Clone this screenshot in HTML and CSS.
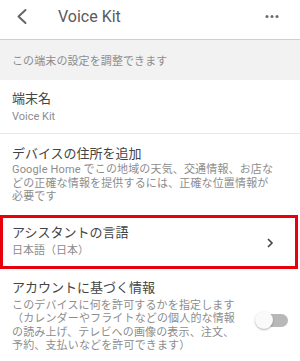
FILE: index.html
```html
<!DOCTYPE html>
<html lang="ja">
<head>
<meta charset="utf-8">
<link rel="stylesheet" href="styles.css">
</head>
<body>
<div class="page">
  <header class="appbar">
    <svg class="back" width="40" height="39" viewBox="0 0 40 39"><polyline points="25.5,10 18.5,16.5 25.5,23" fill="none" stroke="#666" stroke-width="2" stroke-linecap="round" stroke-linejoin="round"/></svg>
    <div class="title">Voice Kit</div>
    <svg class="more" width="20" height="39" viewBox="0 0 20 39"><circle cx="3" cy="16.5" r="1.5" fill="#6a6a6a"/><circle cx="8" cy="16.5" r="1.5" fill="#6a6a6a"/><circle cx="13" cy="16.5" r="1.5" fill="#6a6a6a"/></svg>
  </header>
  <div class="band">この端末の設定を調整できます</div>
  <div class="item item-name">
    <div class="label">端末名</div>
    <div class="sub">Voice Kit</div>
  </div>
  <div class="item item-addr">
    <div class="label">デバイスの住所を追加</div>
    <div class="desc">Google Home でこの地域の天気、交通情報、お店な<br>どの正確な情報を提供するには、正確な位置情報が<br>必要です</div>
  </div>
  <div class="item item-lang">
    <div class="text">
      <div class="label">アシスタントの言語</div>
      <div class="sub">日本語（日本）</div>
    </div>
    <svg class="chev" width="10" height="12" viewBox="0 0 10 12"><polyline points="3,2 7,6 3,10" fill="none" stroke="#444" stroke-width="1.6"/></svg>
  </div>
  <div class="item item-acct">
    <div class="text">
      <div class="label">アカウントに基づく情報</div>
      <div class="desc">このデバイスに何を許可するかを指定します<br>（カレンダーやフライトなどの個人的な情報<br>の読み上げ、テレビへの画像の表示、注文、<br>予約、支払いなどを許可できます）</div>
    </div>
    <div class="toggle"><span class="track"></span><span class="thumb"></span></div>
  </div>
</div>
</body>
</html>
```

FILE: styles.css
```css
html, body {
  margin: 0;
  padding: 0;
  background: #fff;
}
.page {
  width: 300px;
  font-family: Roboto, "Noto Sans CJK JP", sans-serif;
  overflow: hidden;
}
.appbar {
  height: 39px;
  border-bottom: 1px solid #cfcfcf;
  display: flex;
  align-items: flex-start;
  box-shadow: 0 1px 1px rgba(0,0,0,0.04);
}
.back {
  display: block;
  margin-right: 18px;
}
.title {
  font-size: 16px;
  line-height: 33px;
  color: #5a5a5a;
  flex: 1;
}
.more {
  display: block;
  margin-right: 16px;
}
.band {
  height: 40px;
  background: #f2f2f2;
  box-sizing: border-box;
  padding: 15px 0 0 12px;
  font-size: 11px;
  line-height: 14px;
  color: #8d8d8d;
  letter-spacing: 0.1px;
}
.item {
  padding-left: 12px;
  white-space: nowrap;
}
.label {
  font-size: 13px;
  line-height: 16px;
  color: #444;
}
.sub {
  font-size: 11px;
  line-height: 14px;
  color: #8d8d8d;
}
.desc {
  font-size: 11px;
  line-height: 13.5px;
  color: #8d8d8d;
  margin-top: 1px;
  letter-spacing: 0.15px;
}
.item-name {
  padding-top: 11px;
  padding-bottom: 9px;
  border-bottom: 1px solid #e8e8e8;
}
.item-name .sub {
  margin-top: 3px;
}
.item-addr {
  padding-top: 12px;
  padding-bottom: 11px;
}
.item-lang {
  border: 3px solid #e8000b;
  margin-right: 2px;
  padding: 7px 0 8px 9px;
  display: flex;
  align-items: center;
}
.item-lang .text {
  flex: 1;
}
.item-lang .sub {
  margin-top: 3px;
}
.chev {
  display: block;
  margin-right: 20px;
  margin-top: 3px;
}
.item-acct {
  padding-top: 11px;
  display: flex;
  align-items: flex-start;
}
.item-acct .text {
  flex: 1;
}
.item-acct .desc {
  margin-top: 3px;
}
.toggle {
  position: relative;
  width: 29px;
  height: 18px;
  margin-top: 32px;
  margin-right: 12px;
}
.track {
  position: absolute;
  left: 1px;
  top: 2px;
  width: 28px;
  height: 13px;
  border-radius: 7px;
  background: #b8b8b8;
  display: block;
}
.thumb {
  position: absolute;
  left: -4px;
  top: -1px;
  width: 18px;
  height: 18px;
  border-radius: 50%;
  background: #fafafa;
  box-shadow: 0 1px 2px rgba(0,0,0,0.3);
  display: block;
}
```
